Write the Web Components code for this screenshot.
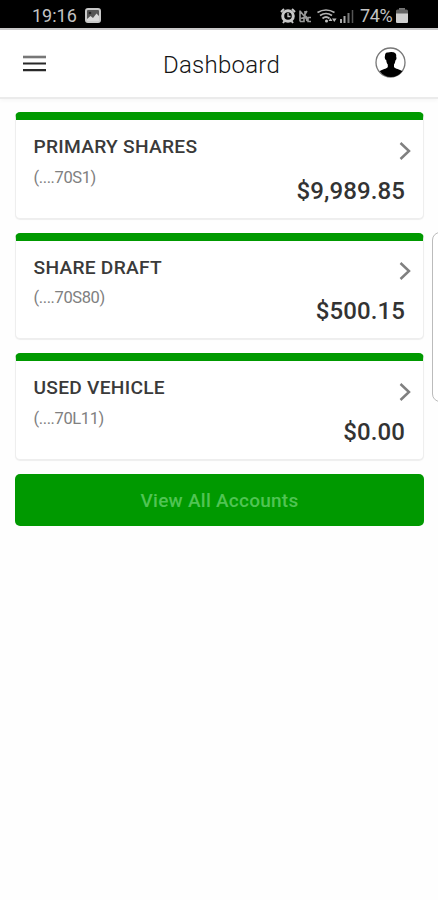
<!DOCTYPE html>
<html lang="en">
<head>
<meta charset="utf-8">
<title>Dashboard</title>
<style>
html,body{margin:0;height:100%;background:#fefefe}
body{font-family:Roboto,"Liberation Sans",sans-serif;overflow:hidden}
</style>
</head>
<body>
<dashboard-screen></dashboard-screen>
<script>
function define(name, html) {
  const template = document.createElement('template');
  template.innerHTML = html;
  customElements.define(name, class extends HTMLElement {
    constructor() {
      super();
      this.attachShadow({mode: 'open'}).append(template.content.cloneNode(true));
    }
  });
}

define('status-bar', `
<style>
:host{display:flex;justify-content:space-between;align-items:center;box-sizing:border-box;height:30px;padding:3px 30px 0 32px;background:#000;border-bottom:2px solid #c9c8c9;color:#c4c4c4;font-size:18px;line-height:22px}
div{display:flex;align-items:center}
svg{display:block}
.time{letter-spacing:0;width:45px;margin-right:8px}
.pct{width:34px;letter-spacing:-.4px;margin:0 2px 0 4px}
</style>
<div><span class="time">19:16</span>
<svg width="16" height="15" viewBox="0 0 16 15"><rect x="1" y="1" width="14" height="13" rx="2" fill="#555" stroke="#c8c8c8" stroke-width="2"/><path d="M2 11l3.500-3 2.500 2 3.500-4.500L14 8v5H2z" fill="#d8d8d8"/><circle cx="5" cy="5" r="1.300" fill="#222"/></svg></div>
<div>
<svg width="76" height="18" viewBox="0 0 76 18">
<g fill="none" stroke="#c8c8c8"><circle cx="8" cy="9" r="5.300" stroke-width="3"/><path d="M1 5l3-3M15 5l-3-3M3 16l1.500-2M13 16l-1.500-2" stroke-width="2"/><path d="M8 6v3.500h2.500" stroke-width="1.300"/></g>
<g fill="none" stroke="#999" stroke-width="1.600"><path d="M20 3.500v11M20 4l5 6V4M27 4l-2.500 4M20 14.500h4v-4l-3 1M26 9l1 5M31 10.500h-3v4h3"/></g>
<g fill="none" stroke="#b4b4b4" stroke-width="1.700"><path d="M37.500 5.500Q46 .5 54.500 5.500M40 8.500Q46 4.500 52 8.500M42.500 11.500Q46 8.500 49.500 11.500"/></g>
<circle cx="46.500" cy="14" r="1.500" fill="#c4c4c4"/><path d="M48.500 14l2-3 2 3zM52 11.500l2.300 3.500 2.300-3.500z" fill="#bbb"/>
<path d="M61 12v4M64.500 9v7" stroke="#aaa" stroke-width="2"/><path d="M68.500 6v10" stroke="#777" stroke-width="2"/><path d="M72.500 3v13" stroke="#555" stroke-width="1.500"/>
</svg>
<span class="pct">74%</span>
<svg width="12" height="15" viewBox="0 0 12 15"><path d="M3 0h6v2H3z" fill="#777"/><rect x="0" y="1.500" width="12" height="13.500" rx="1.500" fill="#656565"/><path d="M0 5.500h12V13.500a1.500 1.500 0 0 1-1.500 1.500h-9A1.500 1.500 0 0 1 0 13.500z" fill="#d0d0d0"/></svg>
</div>`);

define('app-header', `
<style>
:host{display:grid;grid-template-columns:140px 1fr 31px;align-items:center;box-sizing:border-box;height:69px;padding:0 32px 0 23px;background:#fff;border-bottom:2px solid #ebebeb;box-shadow:0 2px 4px #00000008}
h1{margin:2px 0 0;font-weight:300;font-size:24px;line-height:30px;color:#151515;letter-spacing:.25px}
svg{display:block}
.user{margin-bottom:2px}
</style>
<svg width="24" height="18" viewBox="0 0 24 18"><path d="M0 2h23" stroke="#777" stroke-width="2.600"/><path d="M0 8.500h23M0 15.200h23" stroke="#292929" stroke-width="2.200"/></svg>
<h1><slot></slot></h1>
<svg class="user" width="31" height="31" viewBox="0 0 31 31"><circle cx="15.500" cy="15.500" r="14.500" fill="#fff" stroke="#777" stroke-width="1.300"/><path d="M10 8.500c0-2.500 1.500-3 3-3 2-1 8-1 8.200 2.500v2c.6.500.3 3-.8 3.500-.3 2-.7 3-1.400 4v2.500c1.500 2 5.500 2 8.300 4.300A14 14 0 0 1 4.700 24.300c2.800-2.300 6.600-2.300 8.100-4.300v-2.500c-.8-1-1.400-2.500-1.600-4.500-1.300-.5-1.800-3-1.200-4z" fill="#000"/></svg>`);

define('account-card', `
<style>
:host{display:grid;grid-template-columns:1fr auto;box-sizing:border-box;height:106.500px;padding:15px 18px 0 17.500px;border:1px solid #eee;border-top:8px solid #090;border-radius:5px;background:#fff;box-shadow:0 1px 1px #0001;align-content:start}
.name{margin-top:.4px;font-weight:500;font-size:19.200px;line-height:24px;letter-spacing:.26px;color:#3a3a3a}
.num{margin-top:8px;font-size:16.500px;line-height:20px;color:#808080;letter-spacing:-.4px}
svg{display:block;margin:6.500px -7px 0 0;justify-self:end}
.amount{font-weight:500;font-size:24px;line-height:28px;letter-spacing:.1px;color:#333;margin-top:17px;height:0}
</style>
<div class="name"><slot name="name"></slot></div>
<svg width="13" height="18" viewBox="0 0 13 18"><path d="M1.500 1l8.500 8-8.500 8" fill="none" stroke="#808080" stroke-width="2.500"/></svg>
<div class="num"><slot name="number"></slot></div>
<div class="amount"><slot name="amount"></slot></div>`);

define('action-button', `
<style>
:host{display:block}
button{display:block;width:100%;height:52.500px;border:0;border-radius:5px;background:#090;color:#50c453;font:500 19px/54px Roboto,"Liberation Sans",sans-serif;letter-spacing:.25px;padding:0}
</style><button><slot></slot></button>`);

define('edge-handle', `
<style>
:host{position:absolute;right:-10px;top:232px;width:16px;height:170px;box-sizing:border-box;border:1px solid #bbb;border-radius:8px;background:#fff}
</style>`);

define('dashboard-screen', `
<style>
:host{display:block;position:relative;height:900px;overflow:hidden;background:#fefefe}
main{display:flex;flex-direction:column;gap:14px;padding:13px 14px 0 15px}
</style>
<status-bar></status-bar>
<app-header>Dashboard</app-header>
<main>
<account-card><span slot="name">PRIMARY SHARES</span><span slot="number">(....70S1)</span><span slot="amount">$9,989.85</span></account-card>
<account-card><span slot="name">SHARE DRAFT</span><span slot="number">(....70S80)</span><span slot="amount">$500.15</span></account-card>
<account-card><span slot="name">USED VEHICLE</span><span slot="number">(....70L11)</span><span slot="amount">$0.00</span></account-card>
<action-button>View All Accounts</action-button>
</main>
<edge-handle></edge-handle>`);
</script>
</body>
</html>
